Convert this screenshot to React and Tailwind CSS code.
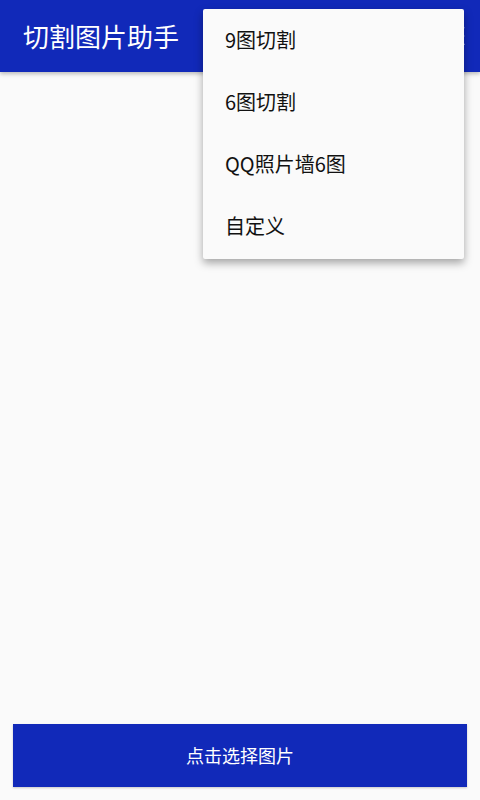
export default function App() {
  const items = ['9图切割', '6图切割', 'QQ照片墙6图', '自定义']
  return (
    <div
      className="relative flex h-[800px] w-[480px] flex-col overflow-hidden bg-[#fafafa]"
      style={{ fontFamily: '"Noto Sans CJK SC", "Noto Sans", sans-serif' }}
    >
      <header className="flex h-[72px] shrink-0 items-center justify-between bg-[#1129b9] pl-[23px] pr-[4px] shadow-[0_2px_4px_rgba(0,0,0,0.25)]">
        <h1 className="text-[26px] leading-none text-white">切割图片助手</h1>
        <svg viewBox="0 0 24 24" className="h-[28px] w-[28px] fill-white">
          <circle cx="12" cy="5" r="2" />
          <circle cx="12" cy="12" r="2" />
          <circle cx="12" cy="19" r="2" />
        </svg>
      </header>

      <main className="flex-1" />

      <div className="px-[13px] pb-[13px]">
        <button className="flex h-[63px] w-full items-center justify-center bg-[#1129b9] text-[18px] text-white shadow-[0_1px_2px_rgba(0,0,0,0.2)]">
          点击选择图片
        </button>
      </div>

      <div className="absolute left-[203px] top-[9px] w-[261px] rounded-[2px] bg-[#fafafa] pb-[2px] shadow-[0_4px_8px_rgba(0,0,0,0.35)]">
        {items.map((label) => (
          <div key={label} className="flex h-[62px] items-center pl-[22px] text-[20px] text-[#111]">
            {label}
          </div>
        ))}
      </div>
    </div>
  )
}
